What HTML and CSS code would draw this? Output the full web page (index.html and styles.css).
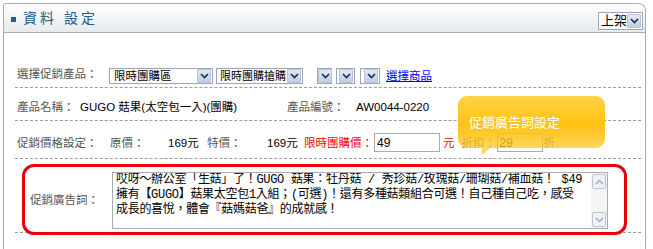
FILE: index.html
```html
<!DOCTYPE html>
<html lang="zh-Hant">
<head>
  <meta charset="UTF-8">
  <meta name="viewport" content="width=device-width, initial-scale=1.0">
  <title>資料設定</title>
  <link rel="stylesheet" href="styles.css">
</head>
<body>
<div class="panel">
  <div class="panel-head">
    <span class="head-dot"></span>
    <h2 class="head-title">資料 設定</h2>
    <span class="combo combo-status">
      <select><option>上架</option><option>下架</option></select>
      <span class="combo-btn"><svg width="9" height="6" viewBox="0 0 9 6"><path d="M1 1 L4.5 4.5 L8 1" fill="none" stroke="#1c2a58" stroke-width="1.6"/></svg></span>
    </span>
  </div>
  <div class="panel-body">
    <div class="row row-pick">
      <span class="label label-pick">選擇促銷產品：</span>
      <span class="combo combo-zone">
        <select><option>限時團購區</option></select>
        <span class="combo-btn"><svg width="9" height="6" viewBox="0 0 9 6"><path d="M1 1 L4.5 4.5 L8 1" fill="none" stroke="#1c2a58" stroke-width="1.6"/></svg></span>
      </span>
      <span class="combo combo-type">
        <select><option>限時團購搶購</option></select>
        <span class="combo-btn"><svg width="9" height="6" viewBox="0 0 9 6"><path d="M1 1 L4.5 4.5 L8 1" fill="none" stroke="#1c2a58" stroke-width="1.6"/></svg></span>
      </span>
      <span class="combo combo-s1">
        <select><option></option></select>
        <span class="combo-btn"><svg width="9" height="6" viewBox="0 0 9 6"><path d="M1 1 L4.5 4.5 L8 1" fill="none" stroke="#1c2a58" stroke-width="1.6"/></svg></span>
      </span>
      <span class="combo combo-s2">
        <select><option></option></select>
        <span class="combo-btn"><svg width="9" height="6" viewBox="0 0 9 6"><path d="M1 1 L4.5 4.5 L8 1" fill="none" stroke="#1c2a58" stroke-width="1.6"/></svg></span>
      </span>
      <span class="combo combo-s3">
        <select><option></option></select>
        <span class="combo-btn"><svg width="9" height="6" viewBox="0 0 9 6"><path d="M1 1 L4.5 4.5 L8 1" fill="none" stroke="#1c2a58" stroke-width="1.6"/></svg></span>
      </span>
      <a class="pick-link" href="#">選擇商品</a>
    </div>

    <div class="row row-info">
      <span class="label label-name">產品名稱：</span>
      <span class="value value-name">GUGO 菇果(太空包一入)(團購)</span>
      <span class="label label-code">產品編號：</span>
      <span class="value">AW0044-0220</span>
    </div>

    <div class="row row-price">
      <span class="label label-price">促銷價格設定：</span>
      <span class="label price-orig">原價：</span>
      <span class="value price-orig-val">169元</span>
      <span class="label price-sale">特價：</span>
      <span class="value price-sale-val">169元</span>
      <span class="hot price-group">限時團購價：</span>
      <input class="field field-group" type="text" value="49">
      <span class="hot price-unit">元</span>
      <span class="label price-off">折扣：</span>
      <input class="field field-off" type="text" value="29">
      <span class="label price-off-unit">折</span>
    </div>

    <div class="row row-ad">
      <div class="ad-box">
        <span class="label label-ad">促銷廣告詞：</span>
        <div class="ad-area">
          <textarea class="ad-text" wrap="off">哎呀～辦公室「生菇」了！GUGO 菇果：牡丹菇 / 秀珍菇/玫瑰菇/珊瑚菇/補血菇！ $49
擁有【GUGO】菇果太空包1入組；(可選)！還有多種菇類組合可選！自己種自己吃，感受
成長的喜悅，體會『菇媽菇爸』的成就感！</textarea>
          <div class="scroll">
            <span class="scroll-btn"><svg width="9" height="6" viewBox="0 0 9 6"><path d="M1 5 L4.5 1.5 L8 5" fill="none" stroke="#9ea8ba" stroke-width="1.4"/></svg></span>
            <span class="scroll-btn"><svg width="9" height="6" viewBox="0 0 9 6"><path d="M1 1 L4.5 4.5 L8 1" fill="none" stroke="#9ea8ba" stroke-width="1.4"/></svg></span>
          </div>
        </div>
      </div>
    </div>

    <div class="tip">促銷廣告詞設定</div>
  </div>
</div>
</body>
</html>
```

FILE: styles.css
```css
html,
body {
  overflow: hidden;
}
body {
  margin: 0;
  padding: 3px 0 0 3px;
  font-family: "Liberation Sans", "Noto Sans CJK TC", sans-serif;
  font-size: 12px;
  color: #555;
  background: #fff;
}
.panel {
  width: 643px;
  height: 246px;
  border: 1px solid #aaa;
  border-bottom: none;
  border-radius: 3px 8px 0 0;
  box-sizing: border-box;
}
.panel-head {
  display: flex;
  align-items: center;
  height: 28px;
  padding: 0 2px 0 7px;
  border-bottom: 1px solid #aaa;
  border-radius: 2px 7px 0 0;
  background: linear-gradient(#fff, #f4f6f7 45%, #e6eaec);
}
.head-dot {
  width: 5px;
  height: 5px;
  margin: 2px 7px 0 0;
  background: #2c5b8b;
}
.head-title {
  flex: 1;
  margin: 0;
  font-size: 14px;
  font-weight: normal;
  letter-spacing: 3px;
  line-height: 16px;
  color: #1f5a8c;
}
.combo {
  display: flex;
  align-items: center;
  flex-shrink: 0;
  height: 16px;
  border: 1px solid #98a6be;
  background: #fff;
  box-sizing: border-box;
}
.combo select {
  appearance: none;
  -webkit-appearance: none;
  flex: 1;
  min-width: 0;
  height: 14px;
  padding: 0 0 0 4px;
  border: none;
  background: transparent;
  font-family: "Liberation Sans", "Noto Sans CJK TC", sans-serif;
  font-size: 11.5px;
  line-height: 14px;
  color: #000;
}
.combo-btn {
  display: flex;
  align-items: center;
  justify-content: center;
  flex-shrink: 0;
  width: 12px;
  height: 12px;
  margin-right: 1px;
  border: 1px solid #b9c4d8;
  border-radius: 1px;
  background: linear-gradient(#e3e9f5, #c3cde1);
}
.combo-status {
  align-self: flex-end;
  width: 45px;
  height: 18px;
  margin-bottom: 2px;
}
.combo-status select {
  padding-left: 2px;
  font-size: 13px;
}
.panel-body {
  position: relative;
  padding: 0 4px 0 11px;
  font-size: 11.5px;
}
.row {
  display: flex;
  align-items: center;
  line-height: 16px;
  white-space: nowrap;
  border-bottom: 1px dashed #9a9a9a;
}
.label {
  flex-shrink: 0;
  color: #555;
}
.value {
  flex-shrink: 0;
  color: #000;
}
.hot {
  flex-shrink: 0;
  color: #f00;
}
.row-pick {
  padding: 35px 0 3px 2px;
}
.label-pick {
  width: 92px;
  margin-top: -5px;
}
.combo-zone {
  width: 104px;
  margin-right: 3px;
}
.combo-type {
  width: 87px;
  margin-right: 14px;
}
.combo-type select {
  padding-left: 3px;
  font-size: 11px;
}
.combo-s1 {
  width: 15px;
  margin-right: 4px;
}
.combo-s2 {
  width: 19px;
  margin-right: 5px;
}
.combo-s3 {
  width: 20px;
  margin-right: 6px;
}
.combo-s1 select,
.combo-s2 select,
.combo-s3 select {
  padding: 0;
}
.pick-link {
  color: #00e;
  text-decoration: underline;
}
.row-info {
  padding: 11px 0 5px 2px;
}
.label-name {
  width: 63px;
}
.value-name {
  width: 207px;
}
.label-code {
  width: 69px;
}
.row-price {
  padding: 12px 0 6px 2px;
}
.label-price {
  width: 93px;
}
.price-orig {
  width: 58px;
}
.price-orig-val {
  width: 39px;
}
.price-sale {
  width: 60px;
}
.price-sale-val {
  width: 37px;
}
.price-group {
  width: 70px;
}
.field {
  height: 19px;
  padding: 0 2px;
  border: 1px solid #a5acb2;
  box-sizing: border-box;
  font-family: "Liberation Sans", sans-serif;
  font-size: 12px;
  color: #000;
}
.field-group {
  width: 66px;
}
.price-unit {
  margin: 0 7px 0 3px;
}
.price-off {
  width: 35px;
}
.field-off {
  width: 46px;
}
.price-off-unit {
  margin-left: 1px;
}
.row-ad {
  padding: 5px 0 0;
}
.ad-box {
  display: flex;
  align-items: center;
  flex: 1;
  margin: 0 14px -3px 7px;
  padding: 5px 16px 3px 5px;
  border: 3px solid #e8000b;
  border-radius: 12px;
  background: #fff;
}
.label-ad {
  width: 82px;
  margin-top: -1px;
}
.ad-area {
  display: flex;
  flex: 1;
  height: 57px;
  border: 1px solid #a5acb2;
  box-sizing: border-box;
}
.ad-text {
  flex: 1;
  min-width: 0;
  margin: 0;
  padding: 0 2px 0 3px;
  border: none;
  outline: none;
  resize: none;
  overflow: hidden;
  font-family: "Liberation Mono", "Noto Sans CJK TC", monospace;
  font-size: 12px;
  letter-spacing: -0.3px;
  line-height: 15px;
  color: #000;
}
.scroll {
  display: flex;
  flex-direction: column;
  justify-content: space-between;
  flex-shrink: 0;
  width: 16px;
  padding: 1px 0;
  box-sizing: border-box;
  background: #f4f4f2;
}
.scroll-btn {
  display: flex;
  align-items: center;
  justify-content: center;
  height: 13px;
  margin: 0 1px;
  border: 1px solid #bcc5d4;
  border-radius: 2px;
  background: #eef1f6;
}
.tip {
  position: absolute;
  left: 454px;
  top: 63px;
  width: 147px;
  height: 52px;
  box-sizing: border-box;
  padding: 19px 0 0 11px;
  border-radius: 9px;
  background: linear-gradient(rgba(255, 208, 60, 0.95), rgba(255, 190, 0, 0.93) 55%, rgba(255, 200, 40, 0.75));
  font-size: 13px;
  line-height: 16px;
  color: #fff;
}
.tip::after {
  content: "";
  position: absolute;
  left: 24px;
  bottom: -7px;
  border-top: 7px solid rgba(255, 200, 40, 0.75);
  border-right: 8px solid transparent;
}
```
